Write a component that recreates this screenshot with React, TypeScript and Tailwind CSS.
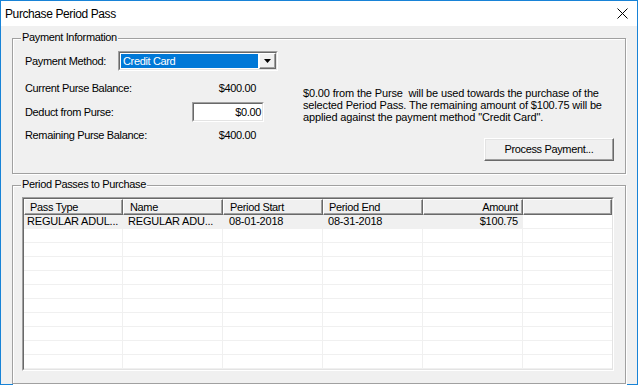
const columns = [
  { title: "Pass Type", width: "w-[99px]", headPad: "pl-[5px]", cellPad: "pl-[3px]", right: false },
  { title: "Name", width: "w-[100px]", headPad: "pl-[6px]", cellPad: "pl-[5px]", right: false },
  { title: "Period Start", width: "w-[100px]", headPad: "pl-[6px]", cellPad: "pl-[6px]", right: false },
  { title: "Period End", width: "w-[100px]", headPad: "pl-[5px]", cellPad: "pl-[5px]", right: false },
  { title: "Amount", width: "w-[100px]", headPad: "pr-[4px]", cellPad: "pr-[4px]", right: true },
];

const passes = [["REGULAR ADUL...", "REGULAR ADU...", "08-01-2018", "08-31-2018", "$100.75"]];

const ROW_COUNT = 11;

function CloseIcon() {
  return (
    <svg width="11" height="11" viewBox="0 0 11 11" aria-hidden>
      <path d="M0.5 0.5L10.5 10.5M10.5 0.5L0.5 10.5" stroke="#000" strokeWidth={1} />
    </svg>
  );
}

function DropArrow() {
  return (
    <svg width="7" height="4" viewBox="0 0 7 4" aria-hidden>
      <path d="M0 0h7L3.5 4z" fill="#000" />
    </svg>
  );
}

function GroupBox({
  title,
  className,
  children,
}: {
  title: string;
  className: string;
  children: React.ReactNode;
}) {
  return (
    <div
      className={`relative border border-[#a0a0a0] shadow-[inset_1px_1px_0_#fff,1px_1px_0_#fff] ${className}`}
    >
      <span className="absolute left-[8px] -top-[8px] bg-[#f0f0f0] px-[1px] leading-[13px]">
        {title}
      </span>
      {children}
    </div>
  );
}

function Sunken({ className, children }: { className: string; children?: React.ReactNode }) {
  return (
    <div
      className={`border border-t-[#a0a0a0] border-l-[#a0a0a0] border-r-white border-b-white ${className}`}
    >
      <div className="flex h-full w-full border border-t-[#696969] border-l-[#696969] border-r-[#e3e3e3] border-b-[#e3e3e3] bg-white">
        {children}
      </div>
    </div>
  );
}

export default function App() {
  return (
    <div className="flex h-[385px] w-[638px] flex-col border border-[#1883d7] bg-[#f0f0f0] font-['Liberation_Sans',Arial,sans-serif] text-[11px] tracking-[-0.35px] text-black">
      {/* title bar */}
      <div className="flex h-[25px] shrink-0 items-center justify-between bg-white pl-[4px] pr-[9px]">
        <span className="text-[12px] leading-[14px] tracking-[-0.4px]">Purchase Period Pass</span>
        <CloseIcon />
      </div>

      <div className="flex flex-1 flex-col gap-[11px] px-[11px] pt-[12px] pb-[11px]">
        <GroupBox title="Payment Information" className="flex h-[136px] shrink-0">
          {/* left column */}
          <div className="w-[290px] shrink-0 pl-[12px] pt-[12px]">
            <div className="flex h-[20px] items-center">
              <span className="w-[93px]">Payment Method:</span>
              <Sunken className="h-[20px] w-[160px]">
                <div className="m-[1px] flex flex-1 items-center bg-[#0078d7] pl-[2px] leading-[13px] text-white">
                  Credit Card
                </div>
                <div className="flex w-[17px] items-center justify-center border border-t-white border-l-white border-r-[#696969] border-b-[#696969] bg-[#f0f0f0] shadow-[inset_-1px_-1px_0_#a0a0a0]">
                  <DropArrow />
                </div>
              </Sunken>
            </div>
            <div className="mt-[9px] flex h-[16px] items-center">
              <span className="w-[167px]">Current Purse Balance:</span>
              <span className="w-[72px] pr-[8px] text-right">$400.00</span>
            </div>
            <div className="mt-[6px] flex h-[20px] items-center">
              <span className="w-[167px]">Deduct from Purse:</span>
              <Sunken className="h-[20px] w-[72px]">
                <div className="flex flex-1 items-center justify-end pr-[1px]">$0.00</div>
              </Sunken>
            </div>
            <div className="mt-[5px] flex h-[16px] items-center">
              <span className="w-[167px]">Remaining Purse Balance:</span>
              <span className="w-[72px] pr-[8px] text-right">$400.00</span>
            </div>
          </div>

          {/* right column */}
          <div className="flex flex-1 flex-col pt-[48px] pr-[11px]">
            <p className="whitespace-pre leading-[12px] tracking-[-0.15px]">
              {"$0.00 from the Purse  will be used towards the purchase of the\nselected Period Pass. The remaining amount of $100.75 will be\napplied against the payment method \"Credit Card\"."}
            </p>
            <button
              type="button"
              className="mt-[15px] h-[23px] w-[130px] self-end border border-t-white border-l-white border-r-[#696969] border-b-[#696969] bg-[#f0f0f0] shadow-[inset_-1px_-1px_0_#a0a0a0,inset_1px_1px_0_#e3e3e3] leading-[13px]"
            >
              Process Payment...
            </button>
          </div>
        </GroupBox>

        <GroupBox title="Period Passes to Purchase" className="flex flex-1 flex-col pt-[11px] pl-[9px] pr-[11px] pb-[12px]">
          <Sunken className="flex-1 overflow-hidden">
            <div className="flex w-full flex-col overflow-hidden">
              <div className="flex h-[16px] shrink-0">
                {columns.map((col) => (
                  <div
                    key={col.title}
                    className={`flex shrink-0 items-center border border-t-white border-l-white border-r-[#696969] border-b-[#696969] bg-[#f0f0f0] shadow-[inset_-1px_-1px_0_#a0a0a0] leading-[13px] ${col.width} ${col.headPad} ${col.right ? "justify-end" : ""}`}
                  >
                    {col.title}
                  </div>
                ))}
                <div className="flex-1 border border-t-white border-l-white border-r-[#696969] border-b-[#696969] bg-[#f0f0f0] shadow-[inset_-1px_-1px_0_#a0a0a0]" />
              </div>
              {Array.from({ length: ROW_COUNT }).map((_, r) => {
                const data = passes[r];
                return (
                  <div key={r} className="flex h-[14px] shrink-0">
                    {columns.map((col, c) => (
                      <div
                        key={col.title}
                        className={`flex shrink-0 items-center overflow-hidden whitespace-nowrap border-r border-b border-[#f0f0f0] leading-[13px] tracking-[-0.2px] ${col.width} ${col.cellPad} ${col.right ? "justify-end" : ""} ${data ? "bg-[#f0f0f0]" : ""}`}
                      >
                        {data ? data[c] : ""}
                      </div>
                    ))}
                    <div className="flex-1 border-b border-[#f0f0f0]" />
                  </div>
                );
              })}
            </div>
          </Sunken>
        </GroupBox>
      </div>
    </div>
  );
}
